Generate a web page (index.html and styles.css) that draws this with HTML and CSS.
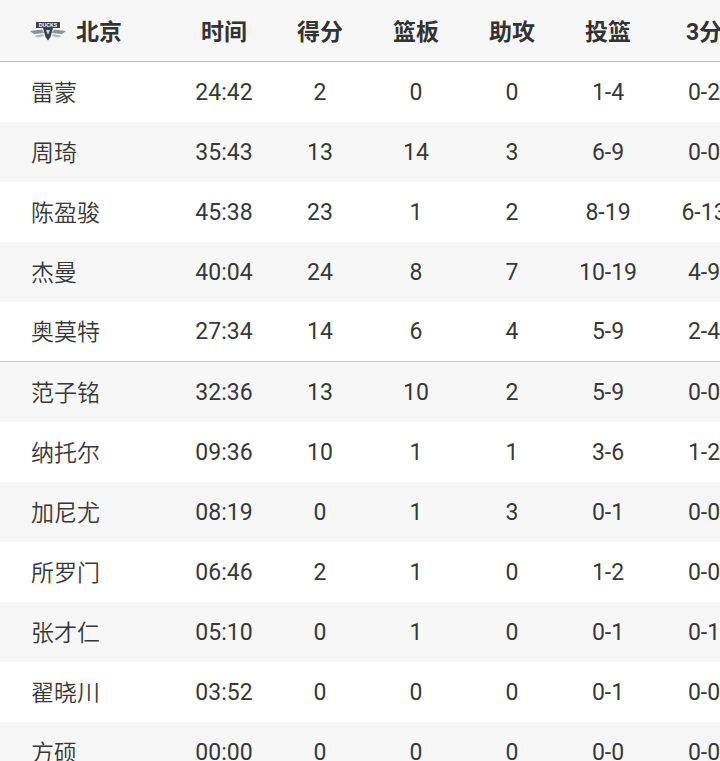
FILE: index.html
```html
<!DOCTYPE html>
<html lang="zh">
<head>
<meta charset="utf-8">
<link rel="stylesheet" href="styles.css">
</head>
<body>
<div class="board">
  <div class="row head">
    <div class="c name team">
      <svg class="logo" width="38" height="20" viewBox="0 0 38 20">
        <path d="M1 10 L13 8.5 L15 12 L5 13 Z" fill="#8a8f99"/>
        <path d="M37 10 L25 8.5 L23 12 L33 13 Z" fill="#8a8f99"/>
        <path d="M5 15 L14 13 L15 15 L9 16.5 Z" fill="#b4b8bf"/>
        <path d="M33 15 L24 13 L23 15 L29 16.5 Z" fill="#b4b8bf"/>
        <rect x="7" y="1" width="24" height="6" fill="#3a3e4a"/>
        <text x="19" y="6" font-size="5.2" font-family="Liberation Sans, sans-serif" font-weight="700" fill="#fff" text-anchor="middle">DUCKS</text>
        <path d="M14 7 L24 7 L21.5 16 L19 19.5 L16.5 16 Z" fill="#3a3e4a"/>
        <path d="M17 9 L21 9 L19 14 Z" fill="#d5d8dd"/>
      </svg>
      <span>北京</span>
    </div>
    <div class="c">时间</div>
    <div class="c">得分</div>
    <div class="c">篮板</div>
    <div class="c">助攻</div>
    <div class="c">投篮</div>
    <div class="c">3分</div>
  </div>
  <div class="row"><div class="c name">雷蒙</div><div class="c">24:42</div><div class="c">2</div><div class="c">0</div><div class="c">0</div><div class="c">1-4</div><div class="c">0-2</div></div>
  <div class="row alt"><div class="c name">周琦</div><div class="c">35:43</div><div class="c">13</div><div class="c">14</div><div class="c">3</div><div class="c">6-9</div><div class="c">0-0</div></div>
  <div class="row"><div class="c name">陈盈骏</div><div class="c">45:38</div><div class="c">23</div><div class="c">1</div><div class="c">2</div><div class="c">8-19</div><div class="c">6-13</div></div>
  <div class="row alt"><div class="c name">杰曼</div><div class="c">40:04</div><div class="c">24</div><div class="c">8</div><div class="c">7</div><div class="c">10-19</div><div class="c">4-9</div></div>
  <div class="row starter-end"><div class="c name">奥莫特</div><div class="c">27:34</div><div class="c">14</div><div class="c">6</div><div class="c">4</div><div class="c">5-9</div><div class="c">2-4</div></div>
  <div class="row alt"><div class="c name">范子铭</div><div class="c">32:36</div><div class="c">13</div><div class="c">10</div><div class="c">2</div><div class="c">5-9</div><div class="c">0-0</div></div>
  <div class="row"><div class="c name">纳托尔</div><div class="c">09:36</div><div class="c">10</div><div class="c">1</div><div class="c">1</div><div class="c">3-6</div><div class="c">1-2</div></div>
  <div class="row alt"><div class="c name">加尼尤</div><div class="c">08:19</div><div class="c">0</div><div class="c">1</div><div class="c">3</div><div class="c">0-1</div><div class="c">0-0</div></div>
  <div class="row"><div class="c name">所罗门</div><div class="c">06:46</div><div class="c">2</div><div class="c">1</div><div class="c">0</div><div class="c">1-2</div><div class="c">0-0</div></div>
  <div class="row alt"><div class="c name">张才仁</div><div class="c">05:10</div><div class="c">0</div><div class="c">1</div><div class="c">0</div><div class="c">0-1</div><div class="c">0-1</div></div>
  <div class="row"><div class="c name">翟晓川</div><div class="c">03:52</div><div class="c">0</div><div class="c">0</div><div class="c">0</div><div class="c">0-1</div><div class="c">0-0</div></div>
  <div class="row alt"><div class="c name">方硕</div><div class="c">00:00</div><div class="c">0</div><div class="c">0</div><div class="c">0</div><div class="c">0-0</div><div class="c">0-0</div></div>
</div>
</body>
</html>
```

FILE: styles.css
```css
html, body {
  margin: 0;
  padding: 0;
  background: #fff;
  overflow: hidden;
}
.board {
  width: 752px;
  font-family: Roboto, "Noto Sans CJK SC", sans-serif;
  font-size: 23px;
  color: #383838;
}
.row {
  display: grid;
  grid-template-columns: 176px repeat(6, 96px);
  height: 60px;
  box-sizing: border-box;
  align-items: center;
  background: #fff;
}
.row.alt {
  background: #f7f7f7;
}
.row.head {
  height: 62px;
  background: #f7f7f7;
  border-bottom: 1px solid #bdbdbd;
  font-weight: 700;
  color: #333;
}
.row.starter-end {
  border-bottom: 1px solid #c4c4c4;
}
.c {
  text-align: center;
  white-space: nowrap;
  line-height: 1;
}
.row.head .c {
  padding-top: 4px;
}
.c.name {
  text-align: left;
  padding-left: 31px;
  padding-bottom: 2px;
  font-family: "Noto Sans CJK SC", sans-serif;
  font-weight: 350;
}
.row.head .c.name {
  font-weight: 700;
  padding-top: 0;
  padding-bottom: 0;
}
.team {
  display: flex;
  align-items: center;
  gap: 9px;
  padding-left: 29px !important;
}
.logo {
  display: block;
}
```
